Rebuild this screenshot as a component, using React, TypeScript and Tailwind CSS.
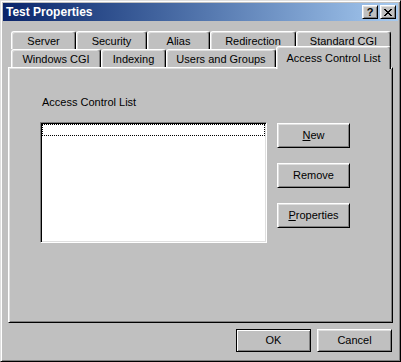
const ROW_BACK = [
  { label: "Server", w: "w-[65px]" },
  { label: "Security", w: "w-[71px]" },
  { label: "Alias", w: "w-[63px]" },
  { label: "Redirection", w: "w-[86px]" },
  { label: "Standard CGI", w: "w-[95px]" },
];

const ROW_FRONT = [
  { label: "Windows CGI", w: "w-[90px]" },
  { label: "Indexing", w: "w-[65px]" },
  { label: "Users and Groups", w: "w-[110px]" },
];

const raised =
  "border border-t-white border-l-white border-r-black border-b-black shadow-[inset_1px_1px_#dfdfdf,inset_-1px_-1px_#808080]";

function Tab({ label, w }: { label: string; w: string }) {
  return (
    <div
      className={`${w} h-[18px] shrink-0 flex items-center justify-center rounded-t-[3px] border-l border-t border-r border-l-white border-t-white border-r-black shadow-[inset_-1px_0_#808080,inset_1px_1px_#dfdfdf] bg-[#c0c0c0] pt-px`}
    >
      {label}
    </div>
  );
}

function Button({ children, wide = false }: { children: React.ReactNode; wide?: boolean }) {
  return (
    <div
      className={`${wide ? "w-[75px] h-[23px]" : "w-[73px] h-[25px]"} ${raised} flex items-center justify-center bg-[#c0c0c0]`}
    >
      {children}
    </div>
  );
}

function CloseGlyph() {
  const px = [
    [0, 0], [1, 0], [6, 0], [7, 0],
    [1, 1], [2, 1], [5, 1], [6, 1],
    [2, 2], [3, 2], [4, 2], [5, 2],
    [3, 3], [4, 3],
    [2, 4], [3, 4], [4, 4], [5, 4],
    [1, 5], [2, 5], [5, 5], [6, 5],
    [0, 6], [1, 6], [6, 6], [7, 6],
  ];
  return (
    <svg width="8" height="7" viewBox="0 0 8 7" shapeRendering="crispEdges">
      {px.map(([x, y], i) => (
        <rect key={i} x={x} y={y} width="1" height="1" fill="#000" />
      ))}
    </svg>
  );
}

export default function App() {
  return (
    <div className="w-[401px] h-[362px] bg-[#c0c0c0] border border-t-[#dfdfdf] border-l-[#dfdfdf] border-r-black border-b-black shadow-[inset_1px_1px_#fff,inset_-1px_-1px_#808080] p-[2px] flex flex-col font-['Liberation_Sans',Arial,sans-serif] text-[11px] text-black leading-[13px]">
      {/* Title bar */}
      <div className="h-[18px] shrink-0 flex items-center pl-[3px] pr-[2px] bg-gradient-to-r from-[#0a246a] to-[#a6caf0]">
        <span className="text-white font-bold text-[12px]">Test Properties</span>
        <div className="ml-auto flex gap-[2px]">
          <div className={`w-[16px] h-[14px] ${raised} bg-[#c0c0c0] flex items-center justify-center font-bold text-[11px] leading-none`}>
            ?
          </div>
          <div className={`w-[16px] h-[14px] ${raised} bg-[#c0c0c0] flex items-center justify-center`}>
            <CloseGlyph />
          </div>
        </div>
      </div>

      <div className="flex flex-col px-[5px] mt-[10px]">
        {/* Tabs */}
        <div className="flex pl-[3px]">
          {ROW_BACK.map((t) => (
            <Tab key={t.label} {...t} />
          ))}
        </div>
        <div className="flex items-end h-[18px] pl-[3px]">
          {ROW_FRONT.map((t) => (
            <Tab key={t.label} {...t} />
          ))}
          <div className="relative z-10 w-[115px] h-[23px] -mb-[2px] shrink-0 flex items-start justify-center pt-[5px] rounded-t-[3px] border-l border-t border-r border-l-white border-t-white border-r-black shadow-[inset_-1px_0_#808080,inset_1px_1px_#dfdfdf] bg-[#c0c0c0]">
            Access Control List
          </div>
        </div>

        {/* Panel */}
        <div className={`h-[256px] ${raised} pl-[31px] pt-[28px]`}>
          <div className="ml-[2px]">Access Control List</div>
          <div className="flex mt-[13px] gap-[10px]">
            <div className="w-[227px] h-[121px] bg-white border border-t-[#808080] border-l-[#808080] border-r-white border-b-white shadow-[inset_1px_1px_#000,inset_-1px_-1px_#dfdfdf] p-px">
              <div className="h-[12px] border border-dotted border-black" />
            </div>
            <div className="flex flex-col gap-[15px] mt-px">
              <Button>
                <span>
                  <span className="underline">N</span>ew
                </span>
              </Button>
              <Button>Remove</Button>
              <Button>
                <span>
                  <span className="underline">P</span>roperties
                </span>
              </Button>
            </div>
          </div>
        </div>

        {/* Dialog buttons */}
        <div className="flex justify-end gap-[6px] mt-[6px] pr-px">
          <div className="w-[75px] h-[23px] border border-black shadow-[inset_1px_1px_#fff,inset_-1px_-1px_#808080] flex items-center justify-center bg-[#c0c0c0]">
            OK
          </div>
          <Button wide>Cancel</Button>
        </div>
      </div>
    </div>
  );
}
